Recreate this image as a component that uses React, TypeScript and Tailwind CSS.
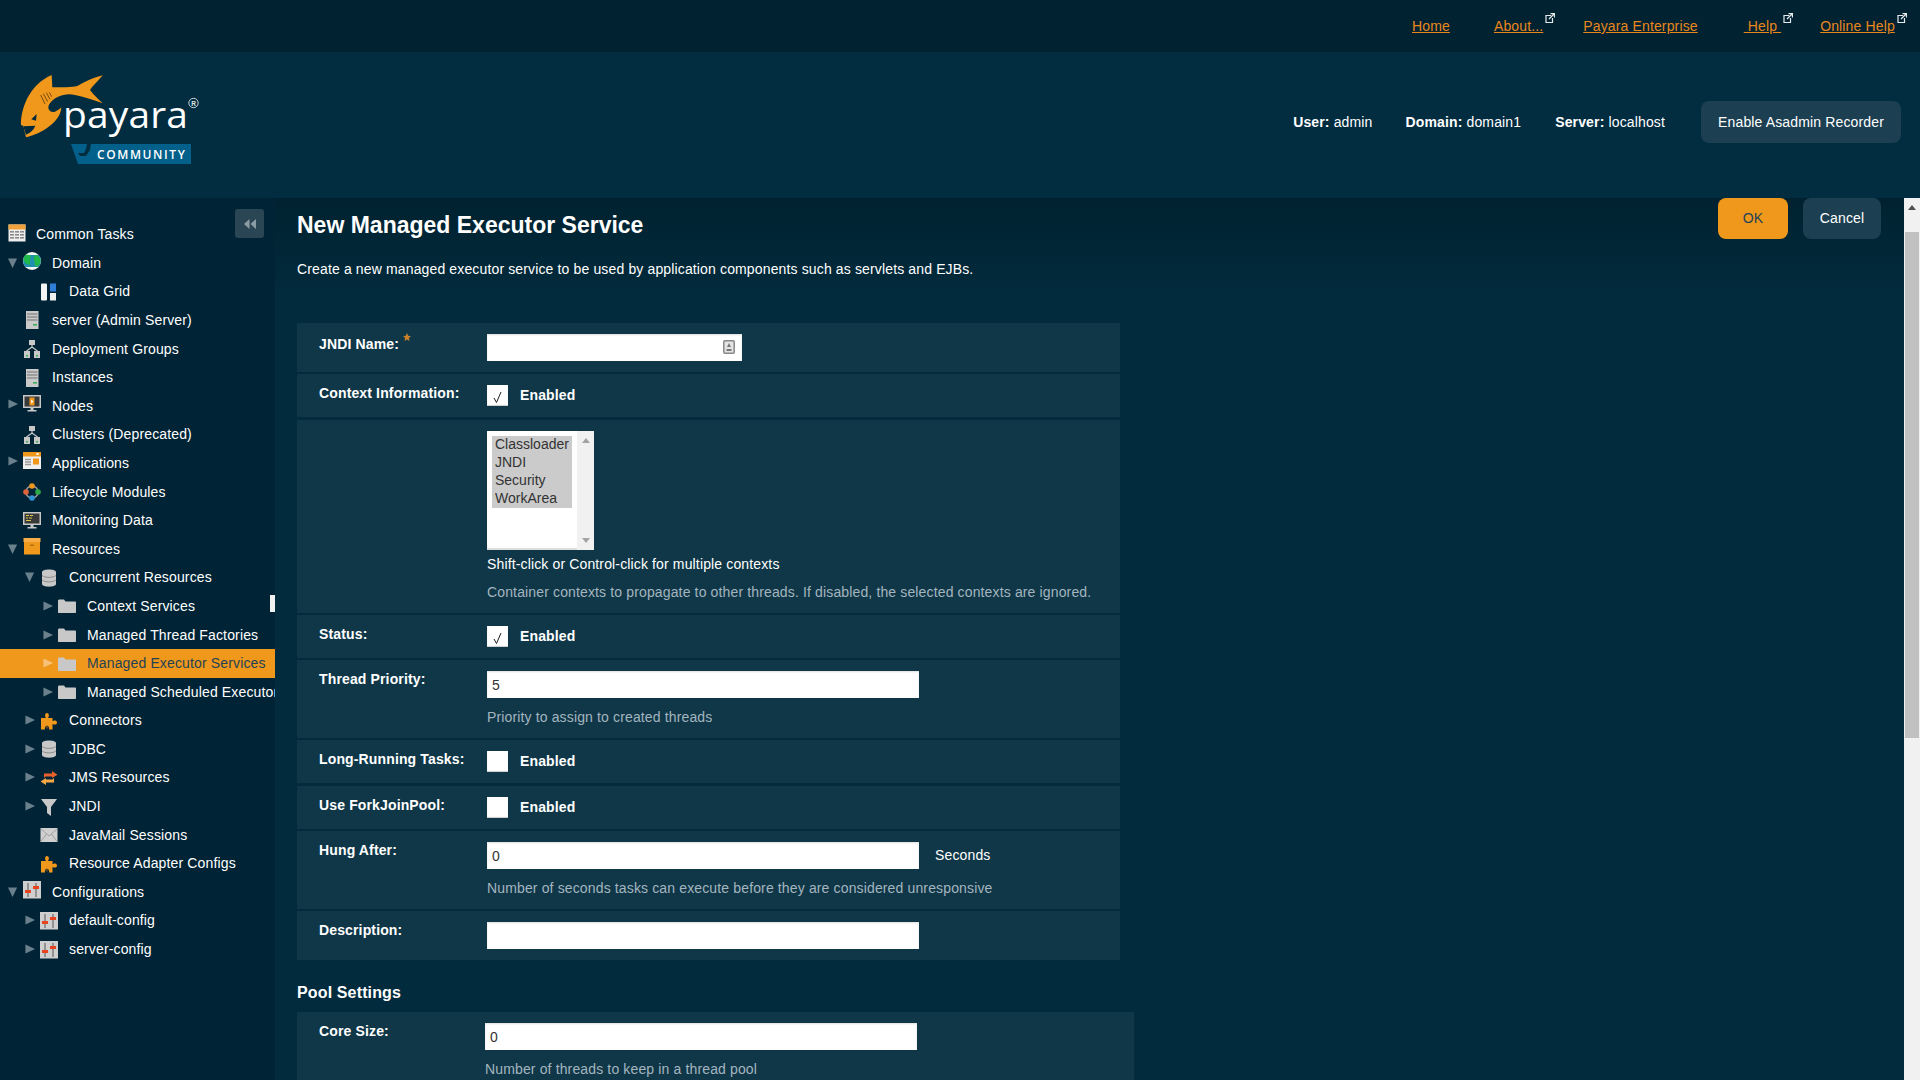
import React from "react";

const G = "#c8c8c8";
function Icon({ k }: { k: string }) {
  const c = "w-[18px] h-[18px] shrink-0";
  switch (k) {
    case "table":
      return (
        <svg viewBox="0 0 18 18" className={c}>
          <rect x="0.5" y="0.5" width="17" height="17" fill="#eee" />
          <rect x="0.5" y="0.5" width="17" height="5" fill="#f0a13a" />
          {[7, 10, 13].map((y) => (
            <g key={y} fill="#8b8b8b">
              <rect x="2" y={y} width="4" height="1.6" />
              <rect x="7" y={y} width="4" height="1.6" />
              <rect x="12" y={y} width="4" height="1.6" />
            </g>
          ))}
        </svg>
      );
    case "globe":
      return (
        <svg viewBox="0 0 18 18" className={c}>
          <circle cx="9" cy="9" r="9" fill="#f2f6f4" />
          <path d="M2.500 3 H15.500 C18.500 6 18.500 12 15.500 15 H2.500 C-.5 12 -.5 6 2.500 3Z" fill="#1f8fb0" />
          <path d="M2.500 3 C5 2.500 8 3 8 5.500 C6 7 8 9.500 6.500 13 C3.500 12.500 1 10 0.300 7.500 C.8 5.500 1.500 4 2.500 3Z" fill="#1fb84a" />
          <path d="M12 3 C15 3 17.500 6 17.700 9 C17.500 12 15.500 14 13 15 C11 12.500 12.500 10 11 8 C10.500 6 11 4.500 12 3Z" fill="#1fb84a" />
        </svg>
      );
    case "grid":
      return (
        <svg viewBox="0 0 18 18" className={c}>
          <rect x="1" y="0.5" width="6" height="17" rx="1" fill="#f4f4f4" />
          <rect x="10" y="0.5" width="6" height="8" fill="#2f7fd9" />
          <rect x="10" y="10" width="6" height="7.5" fill="#f0f0f0" />
        </svg>
      );
    case "server":
      return (
        <svg viewBox="0 0 18 18" className={c}>
          <rect x="3" y="0" width="12.5" height="18" fill="#c9c9c9" />
          <path d="M4 3h10.500M4 6h10.500M4 9h10.500" stroke="#8e8e8e" strokeWidth="1.300" />
          <rect x="10" y="13" width="4" height="1.600" fill="#3fae5b" />
        </svg>
      );
    case "net":
      return (
        <svg viewBox="0 0 18 18" className={c}>
          <rect x="6" y="0" width="6" height="5" fill={G} />
          <path d="M9 5v3M3.500 11 L9 7 L14.500 11" stroke={G} strokeWidth="1.200" fill="none" />
          <rect x="1" y="11" width="6" height="7" fill={G} />
          <rect x="11" y="11" width="6" height="7" fill={G} />
          <rect x="3" y="15" width="2" height="1.500" fill="#3fae5b" />
          <rect x="13" y="15" width="2" height="1.500" fill="#3fae5b" />
        </svg>
      );
    case "monitor":
      return (
        <svg viewBox="0 0 18 18" className={c}>
          <rect x="0" y="0" width="18" height="13" fill={G} />
          <rect x="1.500" y="1.500" width="15" height="10" fill="#39393a" />
          <rect x="6.500" y="2.500" width="5" height="8" fill="#f0981b" />
          <path d="M8.200 4.500 L10.500 6.500 L8.200 8.500Z" fill="#fff" />
          <path d="M7.500 13h3v2h3v1.500h-9V15h3Z" fill={G} />
        </svg>
      );
    case "code":
      return (
        <svg viewBox="0 0 18 18" className={c}>
          <rect x="0" y="0" width="18" height="13" fill={G} />
          <rect x="1.500" y="1.500" width="15" height="10" fill="#39393a" />
          <path d="M3 3.500h3M7 3.500h3M3 6h2M6 6h3M3 8.500h5" stroke="#d9c64a" strokeWidth="1" />
          <path d="M7.500 13h3v2h3v1.500h-9V15h3Z" fill={G} />
        </svg>
      );
    case "app":
      return (
        <svg viewBox="0 0 18 18" className={c}>
          <rect x="0" y="0" width="18" height="17" fill="#efefef" />
          <rect x="0" y="0" width="18" height="4.500" fill="#f0981b" />
          <rect x="10" y="6.500" width="6" height="6" fill="#f0981b" />
          <path d="M2 7.500h6M2 10h6M2 12.500h6" stroke="#999" strokeWidth="1.300" />
          <path d="M13.500 1h2v2h-2Z" fill="#fff" />
        </svg>
      );
    case "life":
      return (
        <svg viewBox="0 0 18 18" className={c}>
          <circle cx="9" cy="9" r="6" fill="none" stroke="#9c9c9c" strokeWidth="1.500" />
          <circle cx="9" cy="3" r="2.800" fill="#f0981b" />
          <circle cx="3" cy="9" r="2.800" fill="#e0633a" />
          <circle cx="15" cy="9" r="2.800" fill="#2aa84a" />
          <circle cx="9" cy="15" r="2.800" fill="#2f95d9" />
        </svg>
      );
    case "box":
      return (
        <svg viewBox="0 0 18 18" className={c}>
          <rect x="0.500" y="0" width="17" height="4" fill="#f7ac45" />
          <rect x="1" y="4" width="16" height="12.500" fill="#f0981b" />
          <rect x="7" y="6.500" width="4" height="1.500" fill="#b66f0c" />
        </svg>
      );
    case "db":
      return (
        <svg viewBox="0 0 18 18" className={c}>
          <path d="M2 3 C2 -0.500 16 -0.500 16 3 V15 C16 18.500 2 18.500 2 15Z" fill={G} />
          <path d="M2 6.500 C5 9 13 9 16 6.500M2 11 C5 13.500 13 13.500 16 11" stroke="#8e8e8e" fill="none" strokeWidth="1" />
        </svg>
      );
    case "folder":
      return (
        <svg viewBox="0 0 18 18" className={c}>
          <path d="M0 4 C0 3 .5 2.500 1.500 2.500H6L7.500 4.500H17C17.600 4.500 18 5 18 5.500V15C18 15.600 17.600 16 17 16H1C.4 16 0 15.600 0 15Z" fill={G} />
        </svg>
      );
    case "puzzle":
      return (
        <svg viewBox="0 0 18 18" className={c}>
          <path d="M1 6h5 C4.500 4 5 1 7 1 C9 1 9.500 4 8 6h4.500v3 C14 8 17 8 17 10.500 C17 13 14 13 12.500 12v5.500H9 C9.500 15.500 8.500 14 7 14 C5.500 14 4.500 15.500 5 17.500H1Z" fill="#f0981b" />
          <circle cx="7" cy="15" r="1.500" fill="#5a4320" />
        </svg>
      );
    case "arrows":
      return (
        <svg viewBox="0 0 18 18" className={c}>
          <path d="M4 4.500h8V2l5.500 3.800L12 9V7.500H5.500L4 9Z" fill="#e8602c" />
          <path d="M14 13.500H6V16L.5 12.500 6 9v1.500h6.500L14 9Z" fill="#f5a845" />
        </svg>
      );
    case "funnel":
      return (
        <svg viewBox="0 0 18 18" className={c}>
          <path d="M1 1h16L11 9v9l-4-3V9Z" fill={G} />
        </svg>
      );
    case "mail":
      return (
        <svg viewBox="0 0 18 18" className={c}>
          <rect x="0.500" y="2" width="17" height="14" fill="#cfcfcf" />
          <path d="M1 3 L9 10 L17 3M1 15.500 L6.500 8M17 15.500 L11.500 8" stroke="#a0a0a0" fill="none" strokeWidth="1" />
        </svg>
      );
    case "sliders":
      return (
        <svg viewBox="0 0 18 18" className={c}>
          <rect x="0" y="0" width="18" height="17.500" fill="#cfcfcf" />
          <path d="M5 2v14M13 2v14" stroke="#555" strokeWidth="1" />
          <rect x="2" y="9" width="6" height="3" fill="#e8431f" />
          <rect x="10" y="5" width="6" height="3" fill="#e8431f" />
        </svg>
      );
  }
  return null;
}

function Arrow({ open, light }: { open?: boolean; light?: boolean }) {
  const col = light ? "#f6c27a" : "#6a808c";
  return (
    <svg viewBox="0 0 11 11" className="w-[10px] h-[10px]">
      {open ? <path d="M0 0.500h10L5 11Z" fill={col} /> : <path d="M0.500 0.500L11 5.500 0.500 10.500Z" fill={col} />}
    </svg>
  );
}

type TreeItem = { t: string; d: number; i: string; a?: "o" | "c"; sel?: boolean };
const tree: TreeItem[] = [
  { t: "Domain", d: 0, i: "globe", a: "o" },
  { t: "Data Grid", d: 1, i: "grid" },
  { t: "server (Admin Server)", d: 0, i: "server" },
  { t: "Deployment Groups", d: 0, i: "net" },
  { t: "Instances", d: 0, i: "server" },
  { t: "Nodes", d: 0, i: "monitor", a: "c" },
  { t: "Clusters (Deprecated)", d: 0, i: "net" },
  { t: "Applications", d: 0, i: "app", a: "c" },
  { t: "Lifecycle Modules", d: 0, i: "life" },
  { t: "Monitoring Data", d: 0, i: "code" },
  { t: "Resources", d: 0, i: "box", a: "o" },
  { t: "Concurrent Resources", d: 1, i: "db", a: "o" },
  { t: "Context Services", d: 2, i: "folder", a: "c" },
  { t: "Managed Thread Factories", d: 2, i: "folder", a: "c" },
  { t: "Managed Executor Services", d: 2, i: "folder", a: "c", sel: true },
  { t: "Managed Scheduled Executor Services", d: 2, i: "folder", a: "c" },
  { t: "Connectors", d: 1, i: "puzzle", a: "c" },
  { t: "JDBC", d: 1, i: "db", a: "c" },
  { t: "JMS Resources", d: 1, i: "arrows", a: "c" },
  { t: "JNDI", d: 1, i: "funnel", a: "c" },
  { t: "JavaMail Sessions", d: 1, i: "mail" },
  { t: "Resource Adapter Configs", d: 1, i: "puzzle" },
  { t: "Configurations", d: 0, i: "sliders", a: "o" },
  { t: "default-config", d: 1, i: "sliders", a: "c" },
  { t: "server-config", d: 1, i: "sliders", a: "c" },
];

const pads: Record<number, string> = { 0: "pl-[8px]", 1: "pl-[25px]", 2: "pl-[43px]" };

function Row({ it }: { it: TreeItem }) {
  const raised = it.d === 0 && !!it.a;
  return (
    <div className={`h-[28.6px] flex items-center whitespace-nowrap ${pads[it.d]} ${it.sel ? "bg-[#f0981b] text-[#1f4256]" : "text-white"}`}>
      <span className={`w-[15px] shrink-0 flex items-center ${raised && it.a === "c" ? "-mt-[4px]" : "-mt-[1px]"}`}>{it.a && <Arrow open={it.a === "o"} light={it.sel} />}</span>
      <span className={raised ? "-mt-[5px]" : ""}>
        <Icon k={it.i} />
      </span>
      <span className="ml-[11px]">{it.t}</span>
    </div>
  );
}

function Ext() {
  return (
    <svg viewBox="0 0 10 10" className="w-[10px] h-[10px] absolute -right-[12px] -top-[3px]">
      <path d="M6 2.500H1v7h6.500V5" stroke="#e6eaec" strokeWidth="1.200" fill="none" />
      <path d="M4 6 L9 1M5.500 0.700H9.500V4.500" stroke="#e6eaec" strokeWidth="1.300" fill="none" />
    </svg>
  );
}

function Link({ t, ml, ext }: { t: string; ml: string; ext?: boolean }) {
  return (
    <span className={`relative underline text-[#e8871e] whitespace-pre ${ml}`}>
      {t}
      {ext && <Ext />}
    </span>
  );
}

function Check({ on }: { on?: boolean }) {
  return (
    <div className="w-[21px] h-[21px] bg-white shadow-[inset_0_-1px_1px_#ccc] flex items-center justify-center shrink-0">
      {on && (
        <svg viewBox="0 0 21 21" className="w-[21px] h-[21px]">
          <path d="M7 13 L9.500 17.500 L14 7" stroke="#222" strokeWidth="1" fill="none" />
        </svg>
      )}
    </div>
  );
}

function Txt({ v, w = "w-[432px]" }: { v?: string; w?: string }) {
  return (
    <input
      readOnly
      defaultValue={v}
      className={`${w} h-[27px] bg-white text-[#333] text-[14px] px-[5px] shadow-[inset_0_1px_2px_#ddd] outline-none`}
    />
  );
}

function F({ label, h, cls = "", pt = "pt-[9px]", children, lw = "w-[190px]" }: any) {
  return (
    <div className={`flex bg-[#103748] ${h} ${cls}`}>
      <div className={`${lw} pl-[22px] shrink-0 font-bold text-white leading-[20px] ${pt}`}>{label}</div>
      <div className="flex-1 pt-[11px]">{children}</div>
    </div>
  );
}

function En({ on }: { on?: boolean }) {
  return (
    <div className="flex items-center">
      <Check on={on} />
      <span className="ml-[12px] font-bold text-white">Enabled</span>
    </div>
  );
}

function Logo() {
  return (
    <svg viewBox="0 52 200 146" className="w-[200px] h-[146px] shrink-0">
      <g transform="scale(0.3333)">
        <path
          d="M155 225 L157 262 C185 262 215 262 232 258 C255 245 280 232 308 226 C292 245 278 258 270 270 C282 285 295 298 308 310 C280 300 250 290 225 285 C195 278 165 290 150 310 C138 325 150 340 165 335 C172 332 178 328 184 322 C184 345 165 368 140 385 C115 402 95 408 78 412 L70 378 L63 375 C62 330 85 255 155 225Z"
          fill="#f0981b"
        />
        <path d="M70 379 L106 377 C102 388 92 398 78 404Z" fill="#00293b" />
        <path d="M94 358 L110 342 L108 362Z" fill="#00293b" />
        <path d="M122 285 L135 312M130 281 L143 305M139 278 L150 298M148 277 L155 290" stroke="#7a4c12" strokeWidth="3" fill="none" />
      </g>
      <text x="63" y="128" fontFamily="'Open Sans', sans-serif" fontWeight="400" fontSize="37" fill="#fff" textLength="125" lengthAdjust="spacingAndGlyphs">
        payara
      </text>
      <circle cx="193.500" cy="103" r="4.700" stroke="#dfe5e8" strokeWidth="0.900" fill="none" />
      <text x="191.200" y="105.500" fontFamily="'Liberation Sans', sans-serif" fontWeight="700" fontSize="6.500" fill="#dfe5e8">R</text>
      <path d="M71 144 H87 L86 149 L84 153 H78 L80 156 H86 L90 150 L91 144 H191 V164 H78 Z" fill="#03608a" />
      <text x="97" y="159" fontFamily="'Open Sans', sans-serif" fontWeight="600" fontSize="12" fill="#fff" letterSpacing="1.600">
        COMMUNITY
      </text>
    </svg>
  );
}

export default function App() {
  return (
    <div className="w-[1920px] h-[1080px] overflow-hidden flex flex-col bg-[#022b3d] text-[14px] tracking-[0.14px] text-white font-['Liberation_Sans',Arial,sans-serif]">
      <div className="h-[52px] bg-[#002231] flex items-center">
        <div className="ml-[1412px] flex items-center">
          <Link t="Home" ml="" />
          <Link t="About..." ml="ml-[44px]" ext />
          <Link t="Payara Enterprise" ml="ml-[40px]" />
          <Link t=" Help " ml="ml-[46px]" ext />
          <Link t="Online Help" ml="ml-[39px]" ext />
        </div>
      </div>
      <div className="h-[146px] bg-[#022d41] flex items-center">
        <Logo />
        <div className="ml-auto flex items-center pr-[19px] pb-[6px]">
          <span className="mr-[33px]"><b>User:</b> admin</span>
          <span className="mr-[34px]"><b>Domain:</b> domain1</span>
          <span className="mr-[36px]"><b>Server:</b> localhost</span>
          <div className="w-[200px] h-[42px] rounded-[8px] bg-[#1c3f52] flex items-center justify-center">Enable Asadmin Recorder</div>
        </div>
      </div>
      <div className="flex flex-1 min-h-0">
        <div className="w-[275px] shrink-0 bg-[#002436] relative overflow-hidden pt-[21px]">
          <div className="absolute left-[235px] top-[11px] w-[29px] h-[29px] rounded-[3px] bg-[#2a4654] flex items-center justify-center">
            <svg viewBox="0 0 12 10" className="w-[12px] h-[10px]">
              <path d="M5.500 0 V10 L0 5Z M12 0 V10 L6.500 5Z" fill="#8b9ca5" />
            </svg>
          </div>
          <div className="absolute left-[270px] top-[397px] w-[5px] h-[17px] bg-[#f2f2f2]" />
          <div className="h-[30px] flex items-center pl-[8px] whitespace-nowrap">
            <span className="-mt-[3px]"><Icon k="table" /></span>
            <span className="ml-[10px]">Common Tasks</span>
          </div>
          {tree.map((it) => (
            <Row key={it.t} it={it} />
          ))}
        </div>
        <div className="flex-1 min-w-0 overflow-hidden pl-[22px] bg-[linear-gradient(#002230,#022b3d_100px)]">
          <div className="flex justify-between pr-[23px]">
            <div>
              <h1 className="text-[23px] tracking-normal font-bold leading-[26px] mt-[14px]">New Managed Executor Service</h1>
              <p className="mt-[22px] leading-[18px]">Create a new managed executor service to be used by application components such as servlets and EJBs.</p>
            </div>
            <div className="flex gap-[15px]">
              <div className="w-[70px] h-[41px] rounded-[8px] bg-[#f0981b] text-[#1f4256] flex items-center justify-center">OK</div>
              <div className="w-[78px] h-[41px] rounded-[8px] bg-[#1c3f52] flex items-center justify-center">Cancel</div>
            </div>
          </div>
          <div className="w-[823px] mt-[45px] flex flex-col gap-[2px]">
            <F
              label={
                <span className="flex items-start">
                  JNDI Name:
                  <svg viewBox="0 0 10 10" className="w-[8px] h-[8px] ml-[4px] -mt-[1px]">
                    <path d="M5 0L6.500 3.500L10 4L7.300 6.300L8.100 10L5 8L1.900 10L2.700 6.300L0 4L3.500 3.500Z" fill="#c9822a" />
                  </svg>
                </span>
              }
              h="h-[49px]"
              pt="pt-[11px]"
            >
              <div className="relative w-[255px]">
                <Txt w="w-[255px]" />
                <svg viewBox="0 0 12 14" className="absolute right-[7px] top-[6px] w-[12px] h-[14px]">
                  <rect x="0.800" y="0.800" width="10.400" height="12.400" rx="1" stroke="#888" strokeWidth="1.500" fill="#e4e4e4" />
                  <path d="M6 3 L8 7H4Z M3.500 9h5v2h-5Z" fill="#777" />
                </svg>
              </div>
            </F>
            <F label="Context Information:" h="h-[43px]">
              <En on />
            </F>
            <div className="flex bg-[#103748] h-[193px] mt-[1px]">
              <div className="w-[190px] shrink-0" />
              <div className="pt-[11px]">
                <div className="w-[107px] h-[119px] bg-white flex text-[#333] shadow-[inset_0_-2px_1px_#ddd]">
                  <div className="w-[90px] pl-[5px] pt-[5px] leading-[18px]">
                    <div className="bg-[#cbcbcb] w-[80px] h-[72px] pl-[3px] text-[14px] tracking-normal overflow-hidden whitespace-nowrap -mt-[0px]">
                      <div className="-mt-[1px]">Classloader</div>
                      <div>JNDI</div>
                      <div>Security</div>
                      <div>WorkArea</div>
                    </div>
                  </div>
                  <div className="w-[17px] bg-[#f1f1f1] flex flex-col justify-between items-center py-[7px]">
                    <svg viewBox="0 0 8 5" className="w-[8px] h-[5px]"><path d="M4 0L8 5H0Z" fill="#a3a3a3" /></svg>
                    <svg viewBox="0 0 8 5" className="w-[8px] h-[5px]"><path d="M4 5L8 0H0Z" fill="#a3a3a3" /></svg>
                  </div>
                </div>
                <div className="mt-[5px] leading-[18px]">Shift-click or Control-click for multiple contexts</div>
                <div className="mt-[10px] leading-[18px] text-[#a3b5bf]">Container contexts to propagate to other threads. If disabled, the selected contexts are ignored.</div>
              </div>
            </div>
            <F label="Status:" h="h-[43px]">
              <En on />
            </F>
            <F label="Thread Priority:" h="h-[78px]">
              <Txt v="5" />
              <div className="mt-[10px] leading-[18px] text-[#a3b5bf]">Priority to assign to created threads</div>
            </F>
            <F label="Long-Running Tasks:" h="h-[43px]">
              <En />
            </F>
            <F label="Use ForkJoinPool:" h="h-[43px]" cls="mt-[1px]">
              <En />
            </F>
            <F label="Hung After:" h="h-[78px]">
              <div className="flex items-center">
                <Txt v="0" />
                <span className="ml-[16px]">Seconds</span>
              </div>
              <div className="mt-[10px] leading-[18px] text-[#a3b5bf]">Number of seconds tasks can execute before they are considered unresponsive</div>
            </F>
            <F label="Description:" h="h-[49px]">
              <Txt />
            </F>
          </div>
          <h2 className="mt-[23px] text-[16px] font-bold leading-[20px]">Pool Settings</h2>
          <div className="w-[837px] mt-[9px] flex bg-[#103748] h-[90px]">
            <div className="w-[188px] pl-[22px] shrink-0 font-bold leading-[20px] pt-[9px]">Core Size:</div>
            <div className="pt-[11px]">
              <Txt v="0" />
              <div className="mt-[10px] leading-[18px] text-[#a3b5bf]">Number of threads to keep in a thread pool</div>
            </div>
          </div>
        </div>
        <div className="w-[16px] shrink-0 bg-[#f1f1f1] flex flex-col items-center">
          <svg viewBox="0 0 8 5" className="w-[8px] h-[5px] mt-[7px]"><path d="M4 0L8 5H0Z" fill="#505050" /></svg>
          <div className="w-[14px] h-[506px] bg-[#c1c1c1] mt-[22px]" />
        </div>
      </div>
    </div>
  );
}
